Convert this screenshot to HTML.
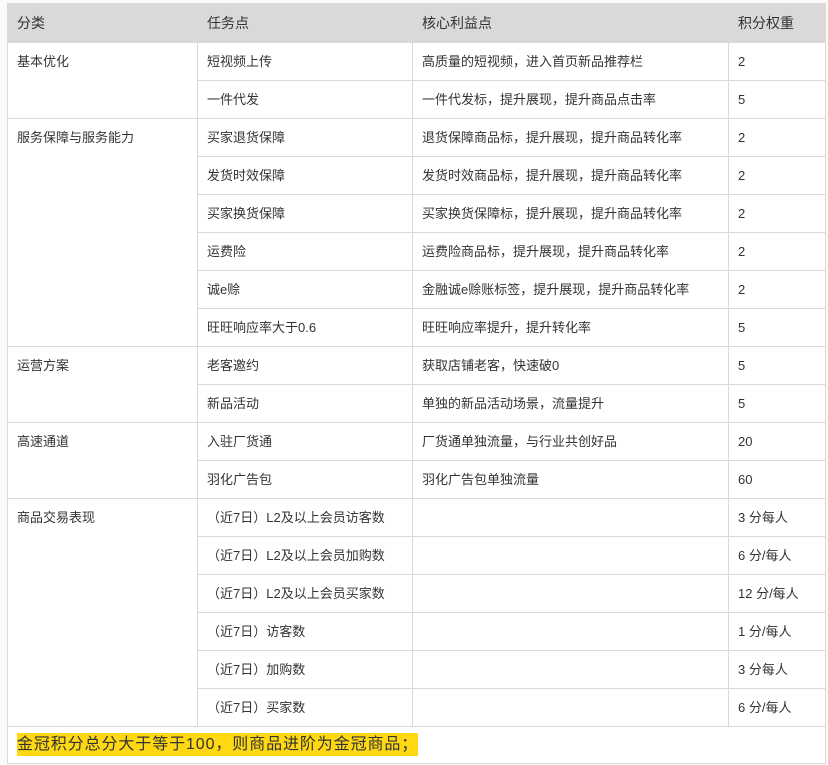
<!DOCTYPE html>
<html><head><meta charset="utf-8"><style>
html,body{margin:0;padding:0;background:#fff;width:828px;height:765px;overflow:hidden}
body{font-family:"Liberation Sans","Noto Sans CJK SC",sans-serif;color:#333;font-size:13px}
.wrap{position:absolute;left:0;top:0;width:828px;height:765px;background:#fafafa}
table{position:absolute;left:7px;top:3px;border-collapse:collapse;width:818px;background:#fff;table-layout:fixed}
td,th{border:1px solid #d9d9d9;padding:0 0 0 9px;height:37px;line-height:37px;vertical-align:top;text-align:left;font-weight:normal;white-space:nowrap;overflow:hidden}
th{background:#d9d9d9;height:38px;line-height:38px;font-size:14px}
.ft{height:36px;line-height:36px;font-size:16px}
.ft span{background:#ffd814;letter-spacing:0.9px;padding:3px 0}
</style></head><body><div class="wrap">
<table>
<colgroup><col style="width:190px"><col style="width:215px"><col style="width:316px"><col style="width:97px"></colgroup>
<tr><th>分类</th><th>任务点</th><th>核心利益点</th><th>积分权重</th></tr>
<tr><td rowspan="2">基本优化</td><td>短视频上传</td><td>高质量的短视频，进入首页新品推荐栏</td><td>2</td></tr>
<tr><td>一件代发</td><td>一件代发标，提升展现，提升商品点击率</td><td>5</td></tr>
<tr><td rowspan="6">服务保障与服务能力</td><td>买家退货保障</td><td>退货保障商品标，提升展现，提升商品转化率</td><td>2</td></tr>
<tr><td>发货时效保障</td><td>发货时效商品标，提升展现，提升商品转化率</td><td>2</td></tr>
<tr><td>买家换货保障</td><td>买家换货保障标，提升展现，提升商品转化率</td><td>2</td></tr>
<tr><td>运费险</td><td>运费险商品标，提升展现，提升商品转化率</td><td>2</td></tr>
<tr><td>诚e赊</td><td>金融诚e赊账标签，提升展现，提升商品转化率</td><td>2</td></tr>
<tr><td>旺旺响应率大于0.6</td><td>旺旺响应率提升，提升转化率</td><td>5</td></tr>
<tr><td rowspan="2">运营方案</td><td>老客邀约</td><td>获取店铺老客，快速破0</td><td>5</td></tr>
<tr><td>新品活动</td><td>单独的新品活动场景，流量提升</td><td>5</td></tr>
<tr><td rowspan="2">高速通道</td><td>入驻厂货通</td><td>厂货通单独流量，与行业共创好品</td><td>20</td></tr>
<tr><td>羽化广告包</td><td>羽化广告包单独流量</td><td>60</td></tr>
<tr><td rowspan="6">商品交易表现</td><td>（近7日）L2及以上会员访客数</td><td></td><td>3 分每人</td></tr>
<tr><td>（近7日）L2及以上会员加购数</td><td></td><td>6 分/每人</td></tr>
<tr><td>（近7日）L2及以上会员买家数</td><td></td><td>12 分/每人</td></tr>
<tr><td>（近7日）访客数</td><td></td><td>1 分/每人</td></tr>
<tr><td>（近7日）加购数</td><td></td><td>3 分每人</td></tr>
<tr><td>（近7日）买家数</td><td></td><td>6 分/每人</td></tr>
<tr><td colspan="4" class="ft"><span>金冠积分总分大于等于100，则商品进阶为金冠商品；</span></td></tr>
</table>
</div></body></html>
